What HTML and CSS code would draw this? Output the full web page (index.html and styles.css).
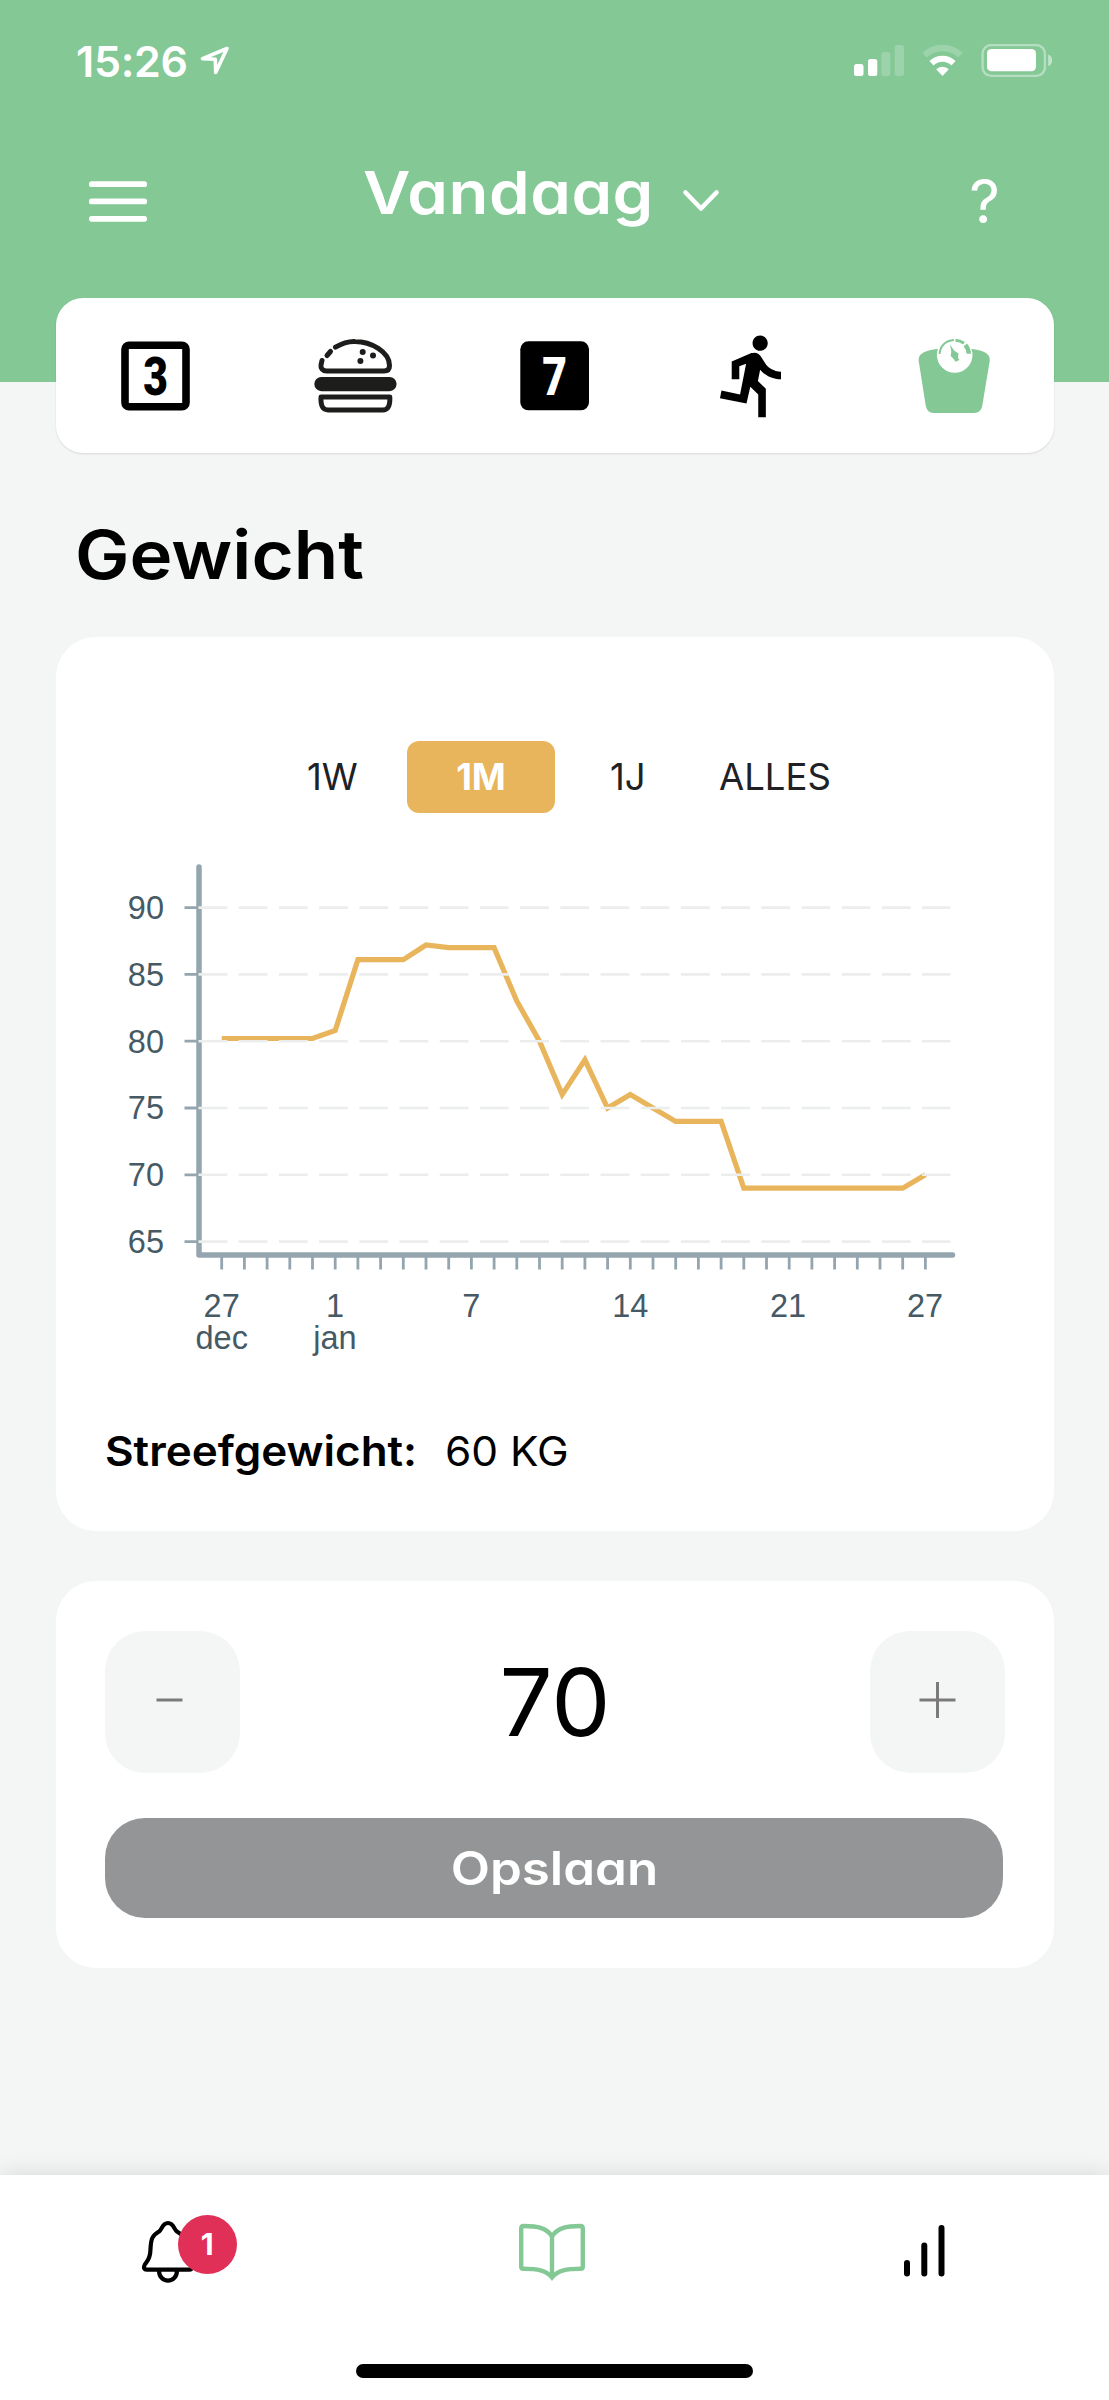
FILE: index.html
```html
<!DOCTYPE html>
<html lang="nl">
<head>
<meta charset="utf-8">
<title>Gewicht</title>
<link rel="stylesheet" href="styles.css">
</head>
<body>
<div class="app">
  <header class="header">
    <div class="status">
      <div class="status-time">
        <span class="clock">15:26</span>
        <svg width="30" height="30" viewBox="0 0 30 30"><path d="M27 2.5 2.5 12.6l12.8.7.4 13.2z" fill="none" stroke="#fff" stroke-width="3.6" stroke-linejoin="round"/></svg>
      </div>
      <svg width="200" height="34" viewBox="853 44 200 34" fill="#fff">
        <rect x="854" y="64" width="9.5" height="12" rx="2.5"/>
        <rect x="868" y="59" width="9.3" height="17" rx="2.5"/>
        <rect x="881.3" y="52" width="9" height="24" rx="2.5" opacity=".2"/>
        <rect x="894.7" y="45" width="9.3" height="31" rx="2.5" opacity=".2"/>
        <path d="M924.5 55.200a26 26 0 0 1 36 0" fill="none" stroke="#fff" stroke-width="6.500" opacity=".2"/>
        <path d="M931.500 63.200a16 16 0 0 1 22 0" fill="none" stroke="#fff" stroke-width="6"/>
        <path d="M942.500 76l-6.300-6.700a9 9 0 0 1 12.600 0z"/>
        <rect x="982.600" y="45.100" width="62.300" height="30.800" rx="8.500" fill="none" stroke="#fff" stroke-width="2.400" opacity=".4"/>
        <rect x="987" y="49" width="49" height="22.300" rx="4.500"/>
        <path d="M1048.200 54.500c5.200 1.800 5.200 10 0 11.800z" opacity=".5"/>
      </svg>
    </div>
    <div class="titlebar">
      <svg class="menu" width="58" height="42" viewBox="0 0 58 42" fill="#fff"><rect y=".3" width="58" height="5.700" rx="2.600"/><rect y="17.600" width="58" height="5.700" rx="2.600"/><rect y="35" width="58" height="5.700" rx="2.600"/></svg>
      <h1 class="day"><span>Vandaag</span></h1>
      <svg class="chevron" width="38" height="24" viewBox="0 0 38 24"><path d="M3.500 3.500 19 19.500 34.500 3.500" fill="none" stroke="#fff" stroke-width="4.600" stroke-linecap="round" stroke-linejoin="round"/></svg>
      <span class="help">?</span>
    </div>
  </header>

  <nav class="tabs">
    <svg width="70" height="70" viewBox="0 0 70 70"><rect x="4" y="4.200" width="61" height="61.600" rx="4" fill="none" stroke="#000" stroke-width="7.600"/><text class="numeral" transform="translate(34.500 54) scale(.79 1)">3</text></svg>
    <svg width="84" height="76" viewBox="313 338 84 76" fill="none" stroke="#1d1d1b" stroke-width="5" stroke-linecap="round">
      <path d="M335.500 347.200C344 342.200 350 341.300 355 341.500c16 0 34.500 10.500 34.500 24 0 3.500-2 5.500-5.500 5.500h-57.500c-4 0-6-3-5.500-6l1-4.500"/>
      <path d="m327 355.500 3.500-4"/>
      <rect x="314.300" y="377" width="82.300" height="14.200" rx="7.100" fill="#1d1d1b" stroke="none"/>
      <path d="M321 397h68.800c.5 9-2 13-7 13h-54.600c-5.300 0-7.700-4-7.200-13z" stroke-linejoin="round"/>
      <g fill="#1d1d1b" stroke="none"><circle cx="362.700" cy="352" r="3"/><circle cx="373" cy="355.500" r="3"/><circle cx="360.400" cy="361" r="3"/></g>
    </svg>
    <svg width="70" height="70" viewBox="0 0 70 70"><rect x=".3" y=".3" width="68.700" height="69" rx="8"/><text class="numeral inverse" transform="translate(34.500 54) scale(.79 1)">7</text></svg>
    <svg width="91" height="91" viewBox="0 0 24 24"><path d="M13.490 5.480c1.100 0 2-.9 2-2s-.9-2-2-2-2 .9-2 2 .9 2 2 2zm-3.600 13.900 1-4.400 2.100 2v6h2v-7.500l-2.100-2 .6-3c1.300 1.500 3.300 2.500 5.500 2.500v-2c-1.900 0-3.500-1-4.300-2.400l-1-1.600c-.4-.6-1-1-1.700-1-.3 0-.5.1-.8.1l-5.200 2.200v4.700h2v-3.400l1.800-.7-1.600 8.100-4.900-1-.4 2 7 1.400z"/></svg>
    <svg width="72" height="76" viewBox="917 338 72 76" fill="#84c896">
      <path d="M936 349c-5 .6-10 1.500-13.500 3.500-3.600 2-5.200 4.500-4.800 8.500l7 44.500c.8 4.500 3.500 7.500 8 7.500h40.600c4.500 0 7.400-3 8-7.500l7.400-44.500c.4-4-1-6.500-4.500-8.500-3.500-2-8.200-2.900-13.200-3.500z"/>
      <circle cx="953.700" cy="355" r="17.800" fill="#fff"/>
      <path d="M938.500 354c.5-8 6-13.500 14.500-14" fill="none" stroke="#84c896" stroke-width="2"/>
      <path d="M954.500 340.200c3.500.2 6 1.200 8.500 3" fill="none" stroke="#84c896" stroke-width="3"/>
      <path d="M964.300 344.800c2.200 2.600 3.400 5.600 3.500 9" fill="none" stroke="#84c896" stroke-width="4.400"/>
      <path d="M949 344.500 953 350.500 957.500 353.500 957 358 958.500 360 954.300 361.700 952.700 359 949.700 356 950.300 351.500z"/>
    </svg>
  </nav>

  <main class="content">
    <h2 class="heading"><span>Gewicht</span></h2>

    <section class="card chart-card">
      <div class="ranges"><span class="range w1">1W</span><span class="range active">1M</span><span class="range j1">1J</span><span class="range all">ALLES</span></div>
      <svg class="chart" width="860" height="500" viewBox="105 860 860 500">
        <g fill="none" stroke="#94a5af" stroke-linecap="round" stroke-linejoin="round">
          <path d="M199 867V1255H952.500" stroke-width="5.500"/>
          <path stroke-width="2.800" stroke-linecap="butt" d="M184.500 907.600H199M184.500 974.400H199M184.500 1041.200H199M184.500 1108H199M184.500 1174.800H199M184.500 1241.600H199"/>
        </g>
        <!-- one tick for every day -->
        <path d="M221.700 1263.300H929" stroke="#94a5af" stroke-width="12.600" stroke-dasharray="2.800 19.900" transform="translate(-1.400 0)"/>
        <path d="M221.700 1038.500H312.500L335.200 1030.500 357.900 959.700H403.300L426 945 448.700 947.700H494.100L516.800 1001.100 539.500 1041.200 562.200 1094.600 584.900 1059.900 607.600 1108 630.300 1094.600 653 1108 675.700 1121.400H721.100L743.800 1188.200H902.700L925.400 1174.800" fill="none" stroke="#e8b55c" stroke-width="5.200"/>
        <path stroke="#eceded" stroke-width="2.600" stroke-dasharray="28.800 11.400" d="M198.500 907.600H950.500M198.500 974.400H950.500M198.500 1041.200H950.500M198.500 1108H950.500M198.500 1174.800H950.500M198.500 1241.600H950.500"/>
        <g class="ylabels"><text x="164" y="919">90</text><text x="164" y="985.800">85</text><text x="164" y="1052.600">80</text><text x="164" y="1119.400">75</text><text x="164" y="1186.200">70</text><text x="164" y="1253">65</text></g>
        <g class="xlabels"><text x="221.700" y="1317">27</text><text x="221.700" y="1349">dec</text><text x="335" y="1317">1</text><text x="335" y="1349">jan</text><text x="471.400" y="1317">7</text><text x="630.300" y="1317">14</text><text x="788" y="1317">21</text><text x="925" y="1317">27</text></g>
      </svg>
      <p class="goal"><strong>Streefgewicht:</strong><span>60 KG</span></p>
    </section>

    <section class="card entry">
      <div class="stepper">
        <button class="step"><svg width="38" height="38" viewBox="0 0 38 38"><path d="M2.500 19h26" stroke="#7a7a7a" stroke-width="3"/></svg></button>
        <span class="value">70</span>
        <button class="step"><svg width="38" height="38" viewBox="0 0 38 38"><path d="M.5 19h36M18.500 1v36" stroke="#7a7a7a" stroke-width="3"/></svg></button>
      </div>
      <button class="save"><span>Opslaan</span></button>
    </section>
  </main>

  <footer class="bottom">
    <div class="nav">
      <div class="nav-item bell">
        <svg width="54" height="64" viewBox="0 0 54 64" fill="none" stroke="#000" stroke-width="4.200"><path d="M27 4c-6 0-6 7-9 8.500C11 16.500 10 20 9.500 30 9.300 44 3 43 3 48c0 1.700 1 2.700 3 2.700h42c2 0 3-1 3-2.700 0-5-6.300-4-6.500-18C44 20 43 16.500 36 12.500 33 11 33 4 27 4z"/><path d="M18 51.500c0 13.500 18 13.500 18 0"/></svg>
        <span class="badge">1</span>
      </div>
      <div class="nav-item book"><svg width="66" height="60" viewBox="0 0 66 60" fill="none" stroke="#84c896" stroke-width="4.400"><path d="M33 13.500C28 5 19 3 4.500 3 3 3 2.200 4 2.200 5.500v38c0 1.500.8 2.300 2.300 2.300C18 45.800 27 47 33 54.500 39 47 48 45.800 61.500 45.800c1.500 0 2.300-.8 2.300-2.300v-38C63.800 4 63 3 61.500 3 47 3 38 5 33 13.500zV55"/></svg></div>
      <div class="nav-item"><svg class="bars" width="42" height="54" viewBox="0 0 42 54" stroke="#000" stroke-width="6" stroke-linecap="round"><path d="M4 39v10.500M21.300 21.500v28M38.500 4v45.500"/></svg></div>
    </div>
    <div class="home"></div>
  </footer>
</div>
</body>
</html>
```
FILE: styles.css
```css
* { box-sizing: border-box; }
body { margin: 0; background: #f4f6f5; font-family: Inter, "Liberation Sans", sans-serif; color: #000; }
h1, h2, p { margin: 0; }
svg { display: block; flex: none; }
button { border: 0; padding: 0; font-family: inherit; }
.app { display: flex; flex-direction: column; width: 1109px; height: 2400px; overflow: hidden; font-feature-settings: "cv11"; }

.header { height: 382px; flex: none; background: #84c896; color: #fff; }
.status { display: flex; justify-content: space-between; align-items: center; height: 122px; padding: 0 56px 0 76px; }
.status-time { display: flex; align-items: center; gap: 12px; }
.clock { margin-top: -1px; font-size: 43px; font-weight: 600; letter-spacing: -.3px; }
.titlebar { display: flex; align-items: center; height: 152px; padding: 0 109px 0 89px; }
.menu { margin-top: 7px; }
.day { width: 290px; margin-left: 216px; margin-top: -10px; font-size: 59px; line-height: 80px; font-weight: 600; letter-spacing: .5px; white-space: nowrap; }
.day span, .heading span, .save span, .goal strong, .goal span { display: inline-block; transform-origin: left center; }
.day span { transform: scaleX(1.105); }
.chevron { margin-left: 29px; margin-top: 6px; }
.help { margin-left: auto; margin-top: 5px; font-size: 60px; font-weight: 400; }

.tabs { display: grid; grid-template-columns: repeat(5, 1fr); justify-items: center; align-items: center; height: 155px; flex: none; margin: -84px 55px 0 56px; background: #fff; border-radius: 27px; box-shadow: 0 1px 2px rgba(0, 0, 0, .12); }
.numeral { font: 900 54px Roboto, sans-serif; text-anchor: middle; }
.inverse { fill: #fff; }

.content { flex: 1; padding: 0 55px 0 56px; }
.heading { height: 184px; padding: 57px 0 0 19px; font-size: 67px; line-height: 90px; font-weight: 600; }
.heading span { transform: scaleX(1.085); }
.card { background: #fff; border-radius: 40px; }
.chart-card { height: 894px; padding: 104px 49px 0; }
.ranges { display: flex; align-items: center; height: 72px; color: #202124; font-size: 36.500px; }
.range { white-space: nowrap; }
.w1 { width: 100px; margin-left: 202px; }
.active { width: 148px; height: 72px; border-radius: 12px; background: #e8b55c; color: #fff; font-weight: 700; line-height: 72px; text-align: center; }
.j1 { width: 109px; margin-left: 55px; }
.chart { margin-top: 47px; }
.chart text { font: 32.500px "Liberation Sans", Arial, sans-serif; fill: #455a64; }
.ylabels { text-anchor: end; }
.xlabels { text-anchor: middle; }
.goal { display: flex; gap: 49px; margin-top: 66px; padding-left: 0; font-size: 41px; line-height: 50px; }
.goal strong { font-weight: 600; transform: scaleX(1.073); }
.goal span { transform: scaleX(1.035); }

.entry { height: 387px; margin-top: 50px; padding: 50px 49px; }
.stepper { display: flex; justify-content: space-between; align-items: center; }
.step { display: flex; justify-content: center; align-items: center; width: 135px; height: 142px; padding-bottom: 4px; border-radius: 40px; background: #f4f6f5; }
.value { font-size: 94px; line-height: 142px; }
.save { width: 898px; height: 100px; margin-top: 45px; border-radius: 40px; background: #949596; color: #fff; font-size: 46px; font-weight: 600; font-feature-settings: "cv11"; }
.save span { transform: scaleX(1.11); transform-origin: center; }

.bottom { display: flex; flex-direction: column; align-items: center; justify-content: space-between; height: 225px; flex: none; padding-bottom: 22px; background: #fff; box-shadow: 0 0 22px rgba(0, 0, 0, .13); }
.nav { display: grid; grid-template-columns: repeat(3, 1fr); width: 100%; justify-items: center; padding-top: 44px; }
.nav-item { position: relative; padding-top: 4px; }
.bell { margin-right: 34px; padding-top: 0; }
.book { margin-right: 4px; }
.bars { margin-top: 1px; }
.badge { position: absolute; left: 37px; top: -4px; width: 59px; height: 59px; border-radius: 50%; background: #e03058; color: #fff; font-size: 30px; font-weight: 700; line-height: 59px; text-align: center; }
.home { width: 397px; height: 14px; border-radius: 7px; background: #000; }
```
